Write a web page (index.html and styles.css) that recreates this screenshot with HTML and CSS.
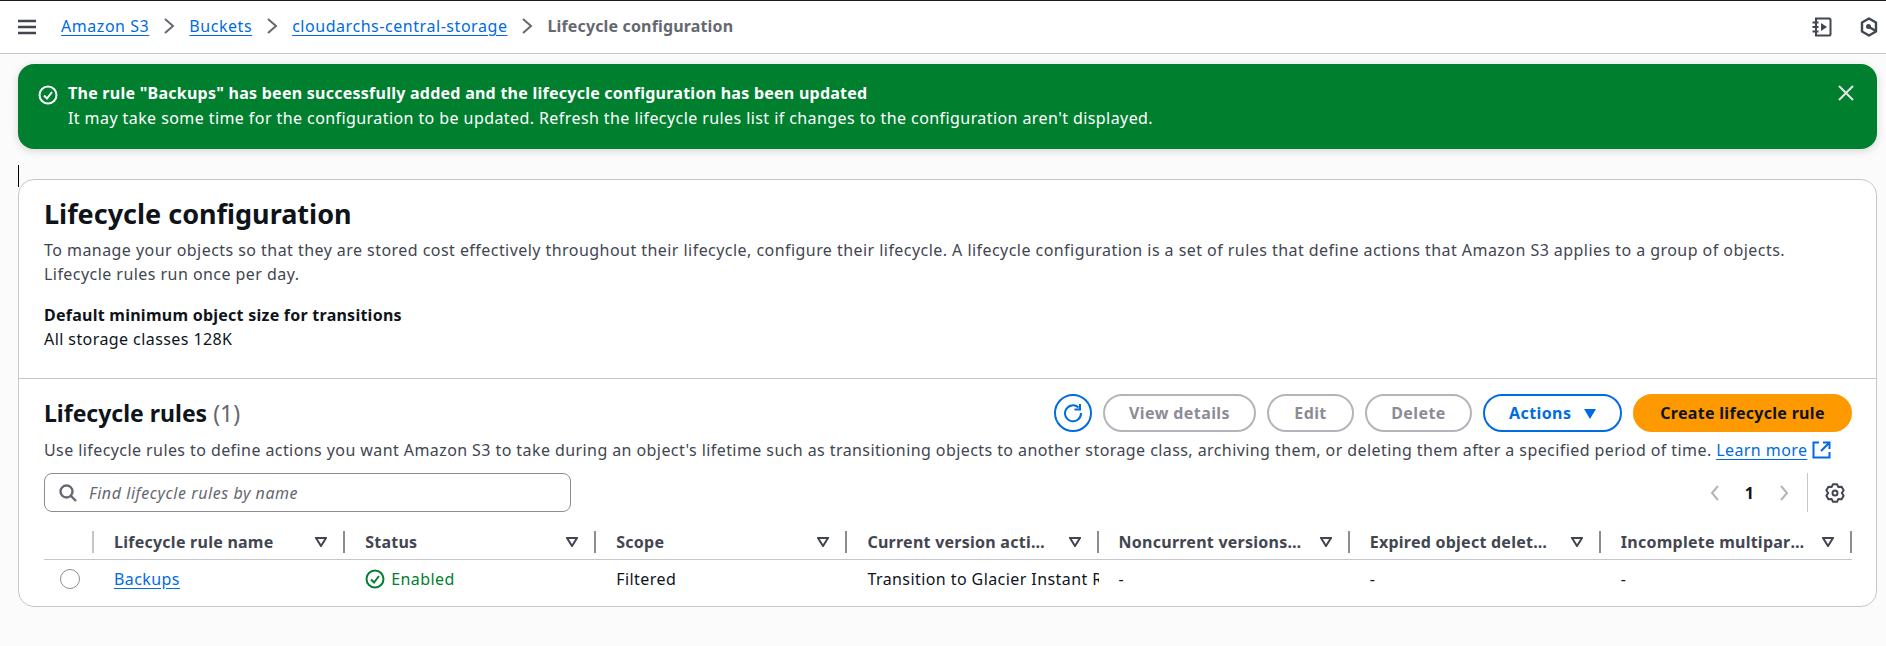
FILE: index.html
```html
<!DOCTYPE html>
<html lang="en">
<head>
    <meta charset="UTF-8">
    <title>Lifecycle configuration</title>
    <link rel="stylesheet" href="styles.css">
</head>
<body>

    <header class="topbar">
        <svg class="menu-icon" width="18" height="16" viewBox="0 0 18 16"><path d="M0 2h18M0 8h18M0 14h18" stroke="#424650" stroke-width="2.4" fill="none"/></svg>
        <nav class="crumbs">
            <a href="#">Amazon S3</a>
            <svg width="12" height="18" viewBox="0 0 12 18"><path d="M2 2l8 7-8 7" stroke="#656871" stroke-width="2" fill="none"/></svg>
            <a href="#">Buckets</a>
            <svg width="12" height="18" viewBox="0 0 12 18"><path d="M2 2l8 7-8 7" stroke="#656871" stroke-width="2" fill="none"/></svg>
            <a href="#">cloudarchs-central-storage</a>
            <svg width="12" height="18" viewBox="0 0 12 18"><path d="M2 2l8 7-8 7" stroke="#656871" stroke-width="2" fill="none"/></svg>
            <span class="crumb-current">Lifecycle configuration</span>
        </nav>
        <div class="top-tools">
            <svg width="20" height="20" viewBox="0 0 20 20" fill="none" stroke="#424650" stroke-width="2"><path d="M4 1.500h13a1.500 1.500 0 0 1 1.500 1.500v14a1.500 1.500 0 0 1-1.500 1.500H4zM0.500 5.500h6M0.500 10h6M0.500 14.500h6"/><path d="M9 6l6 4-6 4z" fill="#424650" stroke="none"/></svg>
            <svg width="18" height="20" viewBox="0 0 18 20" fill="none" stroke="#424650" stroke-width="2.400" stroke-linejoin="round"><path d="M9 1.500l7 4v9l-7 4-7-4v-9z"/><circle cx="8.500" cy="9.500" r="2.500" fill="#424650" stroke="none"/><path d="M9 10l7 4"/></svg>
        </div>
    </header>

    <main class="content">
        <div class="flash">
            <svg class="flash-icon" width="20" height="20" viewBox="0 0 20 20" fill="none" stroke="#fff" stroke-width="2"><circle cx="10" cy="10" r="8.500"/><path d="M6 10.500l3 3 5-6.500"/></svg>
            <div class="flash-text">
                <strong>The rule "Backups" has been successfully added and the lifecycle configuration has been updated</strong>
                <div>It may take some time for the configuration to be updated. Refresh the lifecycle rules list if changes to the configuration aren't displayed.</div>
            </div>
            <svg class="flash-close" width="18" height="18" viewBox="0 0 18 18"><path d="M2 2l14 14M16 2L2 16" stroke="#e6e6e6" stroke-width="2"/></svg>
        </div>

        <span class="caret"></span>

        <section class="card">
            <div class="card-intro">
                <h1>Lifecycle configuration</h1>
                <p>To manage your objects so that they are stored cost effectively throughout their lifecycle, configure their lifecycle. A lifecycle configuration is a set of rules that define actions that Amazon S3 applies to a group of objects. Lifecycle rules run once per day.</p>
                <div class="min-size">
                    <strong>Default minimum object size for transitions</strong>
                    <div>All storage classes 128K</div>
                </div>
            </div>

            <div class="rules">
                <div class="rules-head">
                    <h2>Lifecycle rules <span class="count">(1)</span></h2>
                    <div class="actions">
                        <button class="btn btn-icon"><svg width="20" height="20" viewBox="0 0 20 20" fill="none" stroke="#006ce0" stroke-width="2"><path d="M15.500 4.500A8 8 0 1 0 18 10"/><path d="M17 1v5.500h-5.500"/></svg></button>
                        <button class="btn btn-off btn-view">View details</button>
                        <button class="btn btn-off btn-edit">Edit</button>
                        <button class="btn btn-off btn-delete">Delete</button>
                        <button class="btn btn-blue">Actions <svg width="12" height="10" viewBox="0 0 12 10"><path d="M0 0h12L6 10z" fill="#006ce0"/></svg></button>
                        <button class="btn btn-orange">Create lifecycle rule</button>
                    </div>
                </div>
                <p class="rules-desc">Use lifecycle rules to define actions you want Amazon S3 to take during an object's lifetime such as transitioning objects to another storage class, archiving them, or deleting them after a specified period of time. <a href="#">Learn more</a> <svg class="ext-icon" width="19" height="18" viewBox="0 0 19 18" fill="none" stroke="#006ce0" stroke-width="2"><path d="M7 1.500H1.500v15h16V11M11 1.500h6.500V8M17 2L9 10"/></svg></p>

                <div class="filter-row">
                    <div class="search">
                        <svg width="18" height="18" viewBox="0 0 18 18" fill="none" stroke="#656871" stroke-width="2.400"><circle cx="7.500" cy="7.500" r="6"/><path d="M11.500 11.500l5.500 5.500"/></svg>
                        <span>Find lifecycle rules by name</span>
                    </div>
                    <div class="pager">
                        <svg width="10" height="16" viewBox="0 0 10 16"><path d="M8 1L2 8l6 7" stroke="#b4b4bb" stroke-width="2" fill="none"/></svg>
                        <span class="page-num">1</span>
                        <svg width="10" height="16" viewBox="0 0 10 16"><path d="M2 1l6 7-6 7" stroke="#b4b4bb" stroke-width="2" fill="none"/></svg>
                        <span class="pager-line"></span>
                        <svg width="20" height="20" viewBox="0 0 20 20" fill="none" stroke="#424650" stroke-width="2" stroke-linejoin="round"><path d="M7.980 1.230H12.020L13.400 4.110 16.580 3.860 18.610 7.370 16.800 10 18.610 12.630 16.580 16.140 13.400 15.890 12.020 18.770H7.980L6.600 15.890 3.420 16.140 1.390 12.630 3.200 10 1.390 7.370 3.420 3.860 6.600 4.110z"/><circle cx="10" cy="10" r="2.500"/></svg>
                    </div>
                </div>

                <div class="table">
                    <div class="th th-blank"></div>
                    <div class="th"><span>Lifecycle rule name</span><svg class="sort" width="12" height="10" viewBox="0 0 12 10"><path d="M1 1h10L6 9z" fill="none" stroke="#424650" stroke-width="2"/></svg></div>
                    <div class="th"><span>Status</span><svg class="sort" width="12" height="10" viewBox="0 0 12 10"><path d="M1 1h10L6 9z" fill="none" stroke="#424650" stroke-width="2"/></svg></div>
                    <div class="th"><span>Scope</span><svg class="sort" width="12" height="10" viewBox="0 0 12 10"><path d="M1 1h10L6 9z" fill="none" stroke="#424650" stroke-width="2"/></svg></div>
                    <div class="th"><span>Current version actions</span><svg class="sort" width="12" height="10" viewBox="0 0 12 10"><path d="M1 1h10L6 9z" fill="none" stroke="#424650" stroke-width="2"/></svg></div>
                    <div class="th"><span>Noncurrent versions actions</span><svg class="sort" width="12" height="10" viewBox="0 0 12 10"><path d="M1 1h10L6 9z" fill="none" stroke="#424650" stroke-width="2"/></svg></div>
                    <div class="th"><span>Expired object delete markers</span><svg class="sort" width="12" height="10" viewBox="0 0 12 10"><path d="M1 1h10L6 9z" fill="none" stroke="#424650" stroke-width="2"/></svg></div>
                    <div class="th"><span>Incomplete multipart uploads</span><svg class="sort" width="12" height="10" viewBox="0 0 12 10"><path d="M1 1h10L6 9z" fill="none" stroke="#424650" stroke-width="2"/></svg></div>

                    <div class="td td-radio"><span class="radio"></span></div>
                    <div class="td"><a href="#">Backups</a></div>
                    <div class="td status"><svg width="20" height="20" viewBox="0 0 20 20" fill="none" stroke="#00802f" stroke-width="2"><circle cx="10" cy="10" r="8.500"/><path d="M6 10.500l3 3 5-6.500"/></svg>Enabled</div>
                    <div class="td">Filtered</div>
                    <div class="td">Transition to Glacier Instant Retrieval</div>
                    <div class="td">-</div>
                    <div class="td">-</div>
                    <div class="td">-</div>
                </div>
            </div>
        </section>
    </main>

</body>
</html>
```

FILE: styles.css
```css
body {
    font-family: 'Noto Sans', sans-serif;
    font-size: 16px;
    line-height: 24px;
    letter-spacing: 0.42px;
    color: #0f141a;
    margin: 0;
    background-color: #fbfbfb;
}

a {
    color: #006ce0;
    text-decoration: underline;
    text-underline-offset: 3px;
}

p {
    margin: 0;
}

strong {
    letter-spacing: 0.25px;
}

.topbar {
    display: flex;
    align-items: center;
    height: 52px;
    padding: 0 8px 0 18px;
    background-color: #ffffff;
    border-top: 1px solid #161d26;
    border-bottom: 1px solid #c6c6cd;
}

.menu-icon {
    margin-right: 25px;
}

.crumbs {
    display: flex;
    align-items: center;
    gap: 14px;
    padding-bottom: 2px;
    letter-spacing: 0.55px;
}

.crumb-current {
    color: #656871;
    font-weight: 700;
    letter-spacing: 0.15px;
}

.top-tools {
    display: flex;
    align-items: center;
    gap: 28px;
    margin-left: auto;
}

.content {
    position: relative;
    padding: 10px 9px 0 18px;
}

.flash {
    display: flex;
    align-items: flex-start;
    height: 85px;
    box-sizing: border-box;
    padding: 17px 22px 0 20px;
    line-height: 25px;
    color: #ffffff;
    background-color: #00802f;
    border-radius: 16px;
    box-shadow: 0 2px 8px rgba(0, 0, 0, 0.15);
}

.flash-icon {
    margin: 4px 10px 0 0;
}

.flash-close {
    margin: 3px 0 0 auto;
}

.caret {
    position: absolute;
    left: 18px;
    top: 111px;
    width: 1px;
    height: 22px;
    background-color: #000000;
}

.card {
    margin-top: 30px;
    background-color: #ffffff;
    border: 1px solid #c6c6cd;
    border-radius: 16px;
    height: 428px;
    box-sizing: border-box;
    overflow: hidden;
}

.card-intro {
    height: 199px;
    box-sizing: border-box;
    padding: 16px 25px 0 25px;
    border-bottom: 1px solid #c6c6cd;
}

.card-intro p {
    max-width: 1780px;
    letter-spacing: 0.45px;
    color: #424650;
}

h1 {
    font-size: 27px;
    line-height: 36px;
    font-weight: 700;
    letter-spacing: 0;
    margin: 0 0 6px;
}

.min-size {
    margin-top: 17px;
}

.rules {
    padding: 15px 24px 0 25px;
}

.rules-head {
    display: flex;
    align-items: center;
    justify-content: space-between;
    height: 38px;
}

h2 {
    font-size: 23px;
    line-height: 28px;
    font-weight: 700;
    letter-spacing: 0;
    margin: 0;
}

.count {
    font-weight: 400;
    color: #656871;
}

.actions {
    display: flex;
    gap: 11px;
}

.btn {
    height: 38px;
    box-sizing: border-box;
    font-family: inherit;
    font-size: 16px;
    font-weight: 700;
    letter-spacing: 0.4px;
    border-radius: 20px;
    background-color: #ffffff;
    border: 2px solid #006ce0;
    padding: 0;
    cursor: pointer;
}

.btn-icon {
    width: 38px;
    display: flex;
    align-items: center;
    justify-content: center;
}

.btn-off {
    color: #8c8c94;
    border-color: #b4b4bb;
}

.btn-view {
    width: 153px;
}

.btn-edit {
    width: 87px;
}

.btn-delete {
    width: 107px;
}

.btn-blue {
    width: 139px;
    color: #006ce0;
}

.btn-blue svg {
    margin-left: 8px;
}

.btn-orange {
    width: 219px;
    color: #0f141a;
    background-color: #ff9900;
    border-color: #ff9900;
    letter-spacing: 0.3px;
}

.rules-desc {
    margin-top: 6px;
    color: #424650;
}

.ext-icon {
    vertical-align: -3px;
}

.filter-row {
    display: flex;
    justify-content: space-between;
    align-items: center;
    margin-top: 11px;
    height: 39px;
}

.search {
    display: flex;
    align-items: center;
    gap: 12px;
    width: 527px;
    height: 39px;
    box-sizing: border-box;
    padding-left: 14px;
    background-color: #ffffff;
    border: 1px solid #8c8c94;
    border-radius: 8px;
    color: #656871;
    font-style: italic;
    letter-spacing: 0.55px;
}

.pager {
    display: flex;
    align-items: center;
    height: 39px;
    padding-right: 7px;
}

.page-num {
    font-weight: 700;
    letter-spacing: 0;
    margin: 0 25px;
}

.pager-line {
    width: 1px;
    height: 39px;
    margin: 0 17px 0 18px;
    background-color: #c6c6cd;
}

.table {
    display: grid;
    grid-template-columns: 50px repeat(7, 1fr);
    margin-top: 19px;
}

.th {
    display: flex;
    align-items: center;
    justify-content: space-between;
    height: 29px;
    padding: 0 18px 7px 20px;
    box-sizing: border-box;
    font-weight: 700;
    letter-spacing: 0.25px;
    color: #424650;
    border-bottom: 1px solid #c6c6cd;
    background: linear-gradient(#8c8c94, #8c8c94) right top / 2px 22px no-repeat;
    min-width: 0;
}

.th span {
    overflow: hidden;
    white-space: nowrap;
    text-overflow: ellipsis;
}

.th-blank {
    background-image: linear-gradient(#c6c6cd, #c6c6cd);
}

.sort {
    flex-shrink: 0;
    margin-left: 17px;
}

.td {
    display: flex;
    align-items: center;
    height: 38px;
    padding-left: 20px;
    overflow: hidden;
    white-space: nowrap;
}

.td-radio {
    padding-left: 16px;
}

.radio {
    width: 18px;
    height: 18px;
    border: 1px solid #8c8c94;
    border-radius: 50%;
}

.status {
    gap: 6px;
    color: #00802f;
}
```
